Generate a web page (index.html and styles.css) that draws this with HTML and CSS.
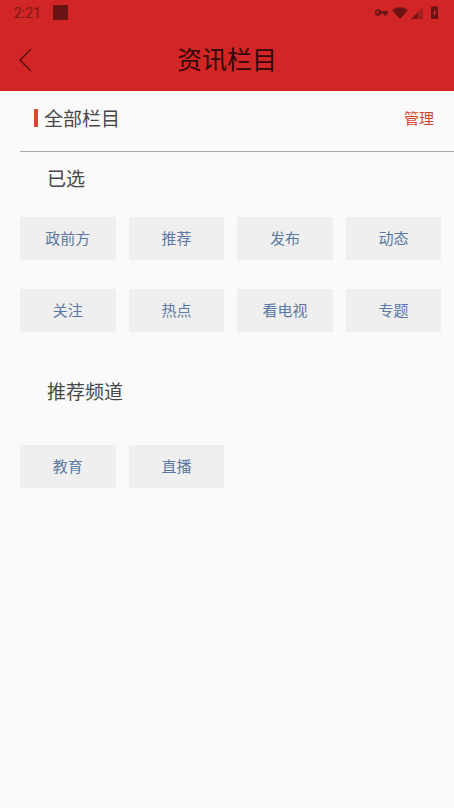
FILE: index.html
```html
<!DOCTYPE html>
<html lang="zh">
<head>
<meta charset="utf-8">
<title>资讯栏目</title>
<link rel="stylesheet" href="styles.css">
</head>
<body>
<header class="appbar">
  <div class="status">
    <span class="time">2:21</span>
    <span class="notif"></span>
    <div class="status-icons">
      <svg class="i-key" width="13" height="7" viewBox="0 0 13 7"><path fill="#6b1414" fill-rule="evenodd" d="M3.2 0.2A3.3 3.3 0 0 1 6.2 2H13V4.8H11.8V6.4H9.2V4.8H6.2A3.3 3.3 0 1 1 3.2 0.2ZM3.2 2.3a1.2 1.2 0 1 0 0 2.2a1.2 1.2 0 0 0 0-2.2Z"/></svg>
      <svg class="i-wifi" width="16" height="12" viewBox="0 0 16 12"><path fill="#6b1414" d="M0 3.2C4.4-0.9 11.6-0.9 16 3.2L8 12Z"/></svg>
      <svg class="i-signal" width="12" height="12" viewBox="0 0 12 12"><path fill="#a81f1f" d="M12 0V12H0Z"/><path fill="#7a1717" d="M7 5V12H0Z"/></svg>
      <svg class="i-batt" width="7" height="13" viewBox="0 0 7 13"><path fill="#6b1414" fill-rule="evenodd" d="M2 0H5V1H7V13H0V1H2ZM4 3L1.8 7.4H3.2L2.9 10.6L5.3 6H3.8Z"/></svg>
    </div>
  </div>
  <div class="toolbar">
    <svg class="back" width="14" height="24" viewBox="0 0 14 24"><path fill="none" stroke="#5a1212" stroke-width="1.5" d="M13 1L2 12.2L13 23"/></svg>
    <h1 class="title">资讯栏目</h1>
  </div>
</header>
<main>
  <div class="head">
    <div class="head-left"><span class="mark"></span><span class="head-title">全部栏目</span></div>
    <span class="manage">管理</span>
  </div>
  <h2 class="sec sec-first">已选</h2>
  <div class="grid grid-selected">
    <div class="tag">政前方</div>
    <div class="tag">推荐</div>
    <div class="tag">发布</div>
    <div class="tag">动态</div>
    <div class="tag">关注</div>
    <div class="tag">热点</div>
    <div class="tag">看电视</div>
    <div class="tag">专题</div>
  </div>
  <h2 class="sec sec-second">推荐频道</h2>
  <div class="grid grid-rec">
    <div class="tag">教育</div>
    <div class="tag">直播</div>
  </div>
</main>
</body>
</html>
```
FILE: styles.css
```css
* { box-sizing: border-box; }
html, body { margin: 0; padding: 0; }
body {
  width: 454px;
  height: 808px;
  overflow: hidden;
  background: #fafafa;
  font-family: "Noto Sans CJK SC", "Noto Sans", sans-serif;
}
.appbar { height: 91px; background: #d12526; }
.status {
  height: 25px;
  display: flex;
  align-items: center;
  padding: 0 16px 0 14px;
}
.time {
  font-family: Roboto, sans-serif;
  font-size: 14px;
  color: #7a1717;
  width: 39px;
}
.notif { width: 15px; height: 15px; background: #6b1414; }
.status-icons {
  margin-left: auto;
  display: flex;
  align-items: center;
}
.i-wifi { margin-left: 4px; }
.i-signal { margin-left: 3px; }
.i-batt { margin-left: 8px; }
.toolbar {
  height: 66px;
  position: relative;
  display: flex;
  align-items: center;
  justify-content: center;
  padding-bottom: 1px;
}
.back { position: absolute; left: 18px; top: 23px; }
.title {
  margin: 0;
  font-size: 25px;
  font-weight: 400;
  line-height: 36px;
  color: #320808;
}
.head {
  height: 61px;
  margin-left: 20px;
  border-bottom: 1px solid #a9a9a9;
  display: flex;
  align-items: center;
  justify-content: space-between;
  padding: 0 20px 6px 14px;
}
.head-left { display: flex; align-items: center; gap: 6px; }
.mark { width: 4px; height: 18px; background: #d9472f; }
.head-title { font-size: 19px; line-height: 26px; color: #474747; }
.manage { font-size: 15px; line-height: 22px; color: #d5452f; }
.sec {
  margin: 0 0 0 47px;
  font-size: 19px;
  font-weight: 400;
  line-height: 26px;
  color: #474747;
}
.sec-first { margin-top: 13px; }
.sec-second { margin-top: 46px; }
.grid {
  display: grid;
  grid-template-columns: repeat(4, 95.6px);
  column-gap: 13px;
  row-gap: 29px;
  padding-left: 20px;
}
.grid-selected { margin-top: 26px; }
.grid-rec { margin-top: 41px; }
.tag {
  height: 43px;
  padding-bottom: 2px;
  background: #efefef;
  display: flex;
  align-items: center;
  justify-content: center;
  font-size: 15px;
  color: #5a78a3;
}
```
